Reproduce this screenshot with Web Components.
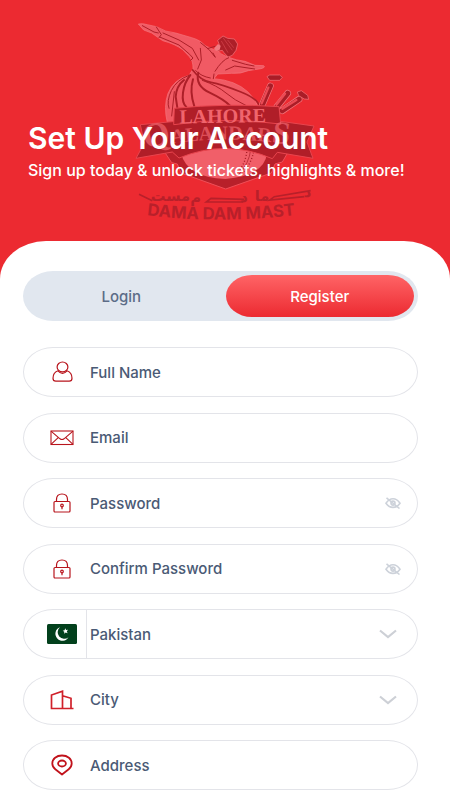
<!DOCTYPE html>
<html lang="en">
<head>
    <meta charset="UTF-8">
    <meta name="viewport" content="width=device-width, initial-scale=1.0">
    <title>Set Up Your Account</title>
    <style>
        * {
            box-sizing: border-box;
        }
        body {
            --red: #ec2a31;
            --ink: #4a5a75;
            --line: #e3e4e9;
            --muted: #cdd2da;
            margin: 0;
            min-height: 100vh;
            display: flex;
            flex-direction: column;
            background: var(--red);
            color: var(--ink);
            font-family: Inter, Roboto, sans-serif;
            font-size: 15px;
            font-weight: 500;
        }
    </style>
</head>
<body>
    <page-hero>
        <team-crest slot="crest"></team-crest>
        <span slot="title">Set Up Your Account</span>
        <span slot="subtitle">Sign up today &amp; unlock tickets, highlights &amp; more!</span>
    </page-hero>

    <form-card>
        <auth-tabs slot="tabs"></auth-tabs>
        <text-field label="Full Name" icon="user"></text-field>
        <text-field label="Email" icon="mail" type="email"></text-field>
        <text-field label="Password" icon="lock" type="password"></text-field>
        <text-field label="Confirm Password" icon="lock" type="password"></text-field>
        <select-field label="Country" value="Pakistan" icon="flag" divided></select-field>
        <select-field label="City" value="City" icon="city"></select-field>
        <text-field label="Address" icon="pin"></text-field>
    </form-card>

    <script>
        const icons = {
            user: `<svg width="22" height="22" viewBox="0 0 22 22" fill="none" stroke="#b8141c" stroke-width="1.2">
                <ellipse cx="11.500" cy="5.900" rx="5.400" ry="4.900"/>
                <path d="M7 9.800C3.800 11 2 13.800 2 17.200Q2 20.200 4.800 20.200H18.200Q21 20.200 21 17.200C21 13.800 19.200 11 16 9.800Q11.500 14.800 7 9.800Z"/></svg>`,
            mail: `<svg width="24" height="16" viewBox="0 0 24 16" fill="none" stroke="#b8141c" stroke-width="1.1">
                <rect x="1" y="1" width="22" height="13.500"/>
                <path d="M1 1.200L10 8.800Q12 10.300 14 8.800L23 1.200M1 14.300L8.200 7.600M23 14.300L15.800 7.600"/></svg>`,
            lock: `<svg width="20" height="20" viewBox="0 0 20 20" fill="none" stroke="#b8141c" stroke-width="1.200">
                <rect x="2" y="8.500" width="16" height="10.500" rx="1"/>
                <path d="M4.500 8.500V6.500C4.500 3 6.800 1 10 1S15.500 3 15.500 6.500V8.500"/>
                <circle cx="10" cy="12.500" r="1.300"/><path d="M10 13.800V16.200"/></svg>`,
            flag: `<svg width="30" height="20" viewBox="0 0 30 20">
                <rect width="30" height="20" rx="1.500" fill="#02401c"/>
                <path d="M13 3.200A7 7 0 1 0 21.500 13.200A6.200 6.200 0 1 1 13 3.200Z" fill="#fff"/>
                <path d="M18.200 4.200L19.100 6L21.100 5.800L19.800 7.300L20.600 9.200L18.700 8.400L17.200 9.700L17.300 7.700L15.700 6.700L17.600 6.200Z" fill="#fff"/></svg>`,
            city: `<svg width="24" height="20" viewBox="0 0 24 20" fill="none" stroke="#d0202a" stroke-width="1.700">
                <path d="M1.500 18.500V5L12.500 1.200V18.500M12.500 5.800L21 8.300V18.500M0.700 18.500H23.500"/></svg>`,
            pin: `<svg width="22" height="22" viewBox="0 0 22 22" fill="none" stroke="#c1121b" stroke-width="1.800" stroke-linejoin="round">
                <path d="M11 20.500L4.300 15.200C2.300 13.600 1.300 11.700 1.300 9.500C1.300 4.800 5.500 1.500 11 1.500S20.700 4.800 20.700 9.500C20.700 11.700 19.700 13.600 17.700 15.200Z"/>
                <ellipse cx="11" cy="9.500" rx="3.900" ry="3"/></svg>`,
            eye: `<svg width="16" height="12" viewBox="0 0 16 12" fill="none" stroke="#cdd2da" stroke-width="1.600">
                <path d="M1 6.200Q4 1.800 8 1.800T15 6.200Q12 10.400 8 10.400T1 6.200Z"/>
                <circle cx="8" cy="6.100" r="2"/><path d="M1.500 0.800L14.500 11.500"/></svg>`,
            chevron: `<svg width="18" height="10" viewBox="0 0 18 10" fill="none" stroke="#cdd0d6" stroke-width="2.200">
                <path d="M1 1.500L9 8L17 1.500"/></svg>`
        };

        // Box and icon column shared by every field
        const fieldStyles = `
            :host {
                display: block;
            }
            * {
                box-sizing: border-box;
            }
            .field {
                display: flex;
                align-items: center;
                height: 50px;
                padding-left: 22px;
                border: 1px solid var(--line);
                border-radius: 30px / 25px;
                background: #fff;
                overflow: hidden;
            }
            .icon {
                flex: none;
                align-self: stretch;
                display: flex;
                align-items: center;
                justify-content: center;
                width: 41px;
                padding-right: 8px;
                border-right: 1px solid transparent;
            }
            svg {
                display: block;
                flex: none;
            }
            input, select {
                flex: 1;
                min-width: 0;
                height: 100%;
                margin: 0;
                padding: 0 0 0 3px;
                border: none;
                outline: none;
                background: transparent;
                color: var(--ink);
                font: inherit;
            }
        `;

        class PageHero extends HTMLElement {
            constructor() {
                super();
                this.attachShadow({ mode: 'open' });
                this.shadowRoot.innerHTML = `
                    <style>
                        :host {
                            display: block;
                        }
                        header {
                            position: relative;
                            padding: 120px 28px 61px;
                            color: #fff;
                        }
                        /* Watermark behind the heading */
                        ::slotted(team-crest) {
                            position: absolute;
                            top: 16px;
                            left: 50%;
                            transform: translateX(-50%);
                        }
                        h1, p {
                            position: relative;
                            margin: 0;
                        }
                        h1 {
                            font-size: 30px;
                            line-height: 36px;
                            font-weight: 600;
                        }
                        p {
                            margin-top: 4px;
                            font-size: 16px;
                            line-height: 20px;
                        }
                    </style>
                    <header>
                        <slot name="crest"></slot>
                        <h1><slot name="title"></slot></h1>
                        <p><slot name="subtitle"></slot></p>
                    </header>
                `;
            }
        }

        class TeamCrest extends HTMLElement {
            constructor() {
                super();
                this.attachShadow({ mode: 'open' });
                this.shadowRoot.innerHTML = `
                    <style>
                        :host {
                            display: block;
                        }
                        svg {
                            display: block;
                        }
                        .serif {
                            font-family: "Liberation Serif", serif;
                            font-weight: 700;
                            fill: #f0656d;
                        }
                        .motto {
                            font-family: Inter, sans-serif;
                            font-weight: 700;
                            font-size: 50px;
                            fill: #b8202a;
                        }
                        .urdu {
                            font-family: "DejaVu Sans", sans-serif;
                            font-weight: 700;
                            font-size: 44px;
                            fill: #b8202a;
                        }
                    </style>
                    <svg width="200" height="212" viewBox="378 48 600 636">
                        <!-- dancer -->
                        <g stroke="#f4777e" stroke-width="2" stroke-linejoin="round">
                            <path fill="#f15a64" d="M418 72Q430 69 445 74L472 80Q500 97 530 99L578 113Q606 121 618 137L638 146L656 152Q666 164 686 171Q712 181 738 184L768 196L794 197Q801 202 786 206L748 212Q725 222 697 220L656 222L645 236Q709 241 746 275Q771 299 780 324L505 368Q493 320 507 280Q525 237 570 226L582 207Q583 182 570 169L551 149Q529 132 491 122L458 99L434 90Z"/>
                            <path fill="#ad1f28" d="M656 121L672 108L686 115L706 117L716 132L711 151L700 166L687 171L675 158L670 151L658 153L653 145L661 134Z"/>
                        </g>
                        <g fill="none" stroke="#ad1f28" stroke-width="3" stroke-linecap="round">
                            <path d="M430 77L465 96L478 99M472 81L487 104L480 113M492 99L540 120L580 145L599 180M482 111L540 135L572 163L582 174L575 181M605 128Q634 148 649 172L642 159M604 145L607 180L596 207"/>
                            <path d="M625 146L648 139M648 214Q669 180 689 173M680 210L707 198L767 207M700 181L740 193L765 198M645 222L643 236M590 212Q606 229 634 234"/>
                            <path d="M581 210Q604 241 636 247T724 275T780 320" stroke-width="5"/>
                            <path d="M598 218Q588 257 632 278T694 318M574 225Q556 247 552 278T562 321M555 240Q532 258 530 290L535 323M582 238Q571 275 586 319" stroke-width="6"/>
                            <path d="M570 226Q532 240 517 272T510 325M526 275L518 348M610 241Q655 257 681 279T740 316"/>
                        </g>
                        <path fill="#f07a80" d="M657 132L665 137L662 149L651 152L645 145Z"/>
                        <g stroke="#d84750" stroke-width="2"><path d="M672 113L700 151M686 120L704 143M667 123L687 158"/></g>

                        <!-- stumps and bails -->
                        <g fill="none" stroke-linecap="round">
                            <path stroke="#f4777e" stroke-width="20" d="M814 258L791 312M866 280L834 320M900 298L850 332"/>
                            <path stroke="#aa1d27" stroke-width="16" d="M814 258L791 312M866 280L834 320M900 298L850 332"/>
                            <path stroke="#eb4b55" stroke-width="7" d="M808 263L788 310M858 281L832 314M892 300L850 326"/>
                        </g>
                        <g fill="#aa1d27" stroke="#f4777e" stroke-width="2">
                            <path d="M804 230L812 225H842L850 232L842 241H812Z"/>
                            <path d="M895 276L907 272L926 286L929 298L916 297L899 287Z"/>
                        </g>

                        <!-- shield and ball -->
                        <path fill="#b8202a" stroke="#f04f58" stroke-width="3" d="M496 455L518 488L535 492L546 519L680 567L817 519L828 492L850 486L868 455Z"/>
                        <path fill="#f15f69" d="M546 459Q678 425 804 459Q797 527 679 537Q563 532 546 459Z"/>
                        <path fill="none" stroke="#a71d26" stroke-width="4" stroke-dasharray="3 6" d="M744 447Q742 492 708 526M765 448Q760 488 728 522"/>
                        <path fill="none" stroke="#a71d26" stroke-width="2" d="M755 448Q751 490 718 525"/>

                        <!-- ribbons -->
                        <g fill="#b01e28" stroke="#e8454e" stroke-width="3">
                            <path d="M424 374L530 364Q680 326 838 363L945 378L924 426L942 475L835 457L820 476Q680 416 540 474L520 456L411 475L436 429Z"/>
                            <path d="M526 325Q682 309 840 320L845 372Q680 350 524 374Z"/>
                        </g>
                        <path id="ribbon" fill="none" d="M438 446Q675 392 935 446"/>
                        <path id="arc" fill="none" d="M444 646Q678 674 935 640"/>
                        <text class="serif" x="541" y="368" font-size="60" transform="rotate(-1 680 350)">LAHORE</text>
                        <text class="serif" font-size="60" opacity="0.7"><textPath href="#ribbon"><tspan font-size="104">Q</tspan>ALANDAR<tspan font-size="96">S</tspan></textPath></text>

                        <!-- motto -->
                        <g class="urdu">
                            <text x="455" y="604">مست</text>
                            <text x="574" y="608">م</text>
                            <text x="724" y="606">د</text>
                            <text x="767" y="604">ما</text>
                            <text x="914" y="590">د</text>
                        </g>
                        <path fill="none" stroke="#b8202a" stroke-width="5" d="M460 602L420 583M733 606H622L636 595L735 598M916 590L812 600L826 590L935 572"/>
                        <text class="motto"><textPath href="#arc">DAMA DAM MAST</textPath></text>
                    </svg>
                `;
            }
        }

        class FormCard extends HTMLElement {
            constructor() {
                super();
                this.attachShadow({ mode: 'open' });
                this.shadowRoot.innerHTML = `
                    <style>
                        :host {
                            flex: 1;
                            display: flex;
                            flex-direction: column;
                            padding: 30px 32px 10px 23px;
                            background: #fff;
                            border-radius: 46px 46px 0 0 / 38px 38px 0 0;
                        }
                        form {
                            flex: 1;
                            display: flex;
                            flex-direction: column;
                            justify-content: space-between;
                            margin-top: 26px;
                        }
                    </style>
                    <slot name="tabs"></slot>
                    <form><slot></slot></form>
                `;
            }
        }

        class AuthTabs extends HTMLElement {
            constructor() {
                super();
                this.attachShadow({ mode: 'open' });
                this.shadowRoot.innerHTML = `
                    <style>
                        :host {
                            display: block;
                        }
                        nav {
                            display: flex;
                            gap: 10px;
                            padding: 4px;
                            border-radius: 30px / 25px;
                            background: #e1e7ef;
                        }
                        button {
                            flex: 1;
                            height: 42px;
                            border: none;
                            border-radius: 26px / 21px;
                            background: none;
                            color: #5c6c87;
                            font: inherit;
                            cursor: pointer;
                        }
                        button[aria-pressed="true"] {
                            background: linear-gradient(#ff6466, #ec2a31);
                            color: #fff;
                        }
                    </style>
                    <nav>
                        <button type="button" aria-pressed="false">Login</button>
                        <button type="button" aria-pressed="true">Register</button>
                    </nav>
                `;
            }

            connectedCallback() {
                const buttons = this.shadowRoot.querySelectorAll('button');
                buttons.forEach(button => button.addEventListener('click', () => {
                    buttons.forEach(b => b.setAttribute('aria-pressed', b === button));
                }));
            }
        }

        class TextField extends HTMLElement {
            constructor() {
                super();
                this.attachShadow({ mode: 'open' });
            }

            connectedCallback() {
                const label = this.getAttribute('label');
                const type = this.getAttribute('type') || 'text';
                const toggle = type === 'password'
                    ? `<button type="button" aria-label="Show password">${icons.eye}</button>` : '';
                this.shadowRoot.innerHTML = `
                    <style>
                        ${fieldStyles}
                        input::placeholder {
                            color: var(--ink);
                            opacity: 1;
                        }
                        button {
                            margin: 0 12px 0 0;
                            padding: 4px;
                            border: none;
                            background: none;
                            cursor: pointer;
                        }
                    </style>
                    <div class="field">
                        <label class="icon" for="control">${icons[this.getAttribute('icon')]}</label>
                        <input id="control" type="${type}" placeholder="${label}" aria-label="${label}">
                        ${toggle}
                    </div>
                `;
                const button = this.shadowRoot.querySelector('button');
                if (button) {
                    const input = this.shadowRoot.querySelector('input');
                    button.addEventListener('click', () => {
                        input.type = input.type === 'password' ? 'text' : 'password';
                    });
                }
            }
        }

        class SelectField extends HTMLElement {
            constructor() {
                super();
                this.attachShadow({ mode: 'open' });
            }

            connectedCallback() {
                this.shadowRoot.innerHTML = `
                    <style>
                        ${fieldStyles}
                        :host([divided]) .icon {
                            border-right-color: var(--line);
                        }
                        .choice {
                            flex: 1;
                            align-self: stretch;
                            display: grid;
                            align-items: center;
                        }
                        .choice > * {
                            grid-area: 1 / 1;
                        }
                        .choice svg {
                            justify-self: end;
                            margin-right: 20px;
                            pointer-events: none;
                        }
                        select {
                            appearance: none;
                        }
                    </style>
                    <div class="field">
                        <label class="icon" for="control">${icons[this.getAttribute('icon')]}</label>
                        <div class="choice">
                            <select id="control" aria-label="${this.getAttribute('label')}">
                                <option>${this.getAttribute('value')}</option>
                            </select>
                            ${icons.chevron}
                        </div>
                    </div>
                `;
            }
        }

        customElements.define('page-hero', PageHero);
        customElements.define('team-crest', TeamCrest);
        customElements.define('form-card', FormCard);
        customElements.define('auth-tabs', AuthTabs);
        customElements.define('text-field', TextField);
        customElements.define('select-field', SelectField);
    </script>
</body>
</html>
